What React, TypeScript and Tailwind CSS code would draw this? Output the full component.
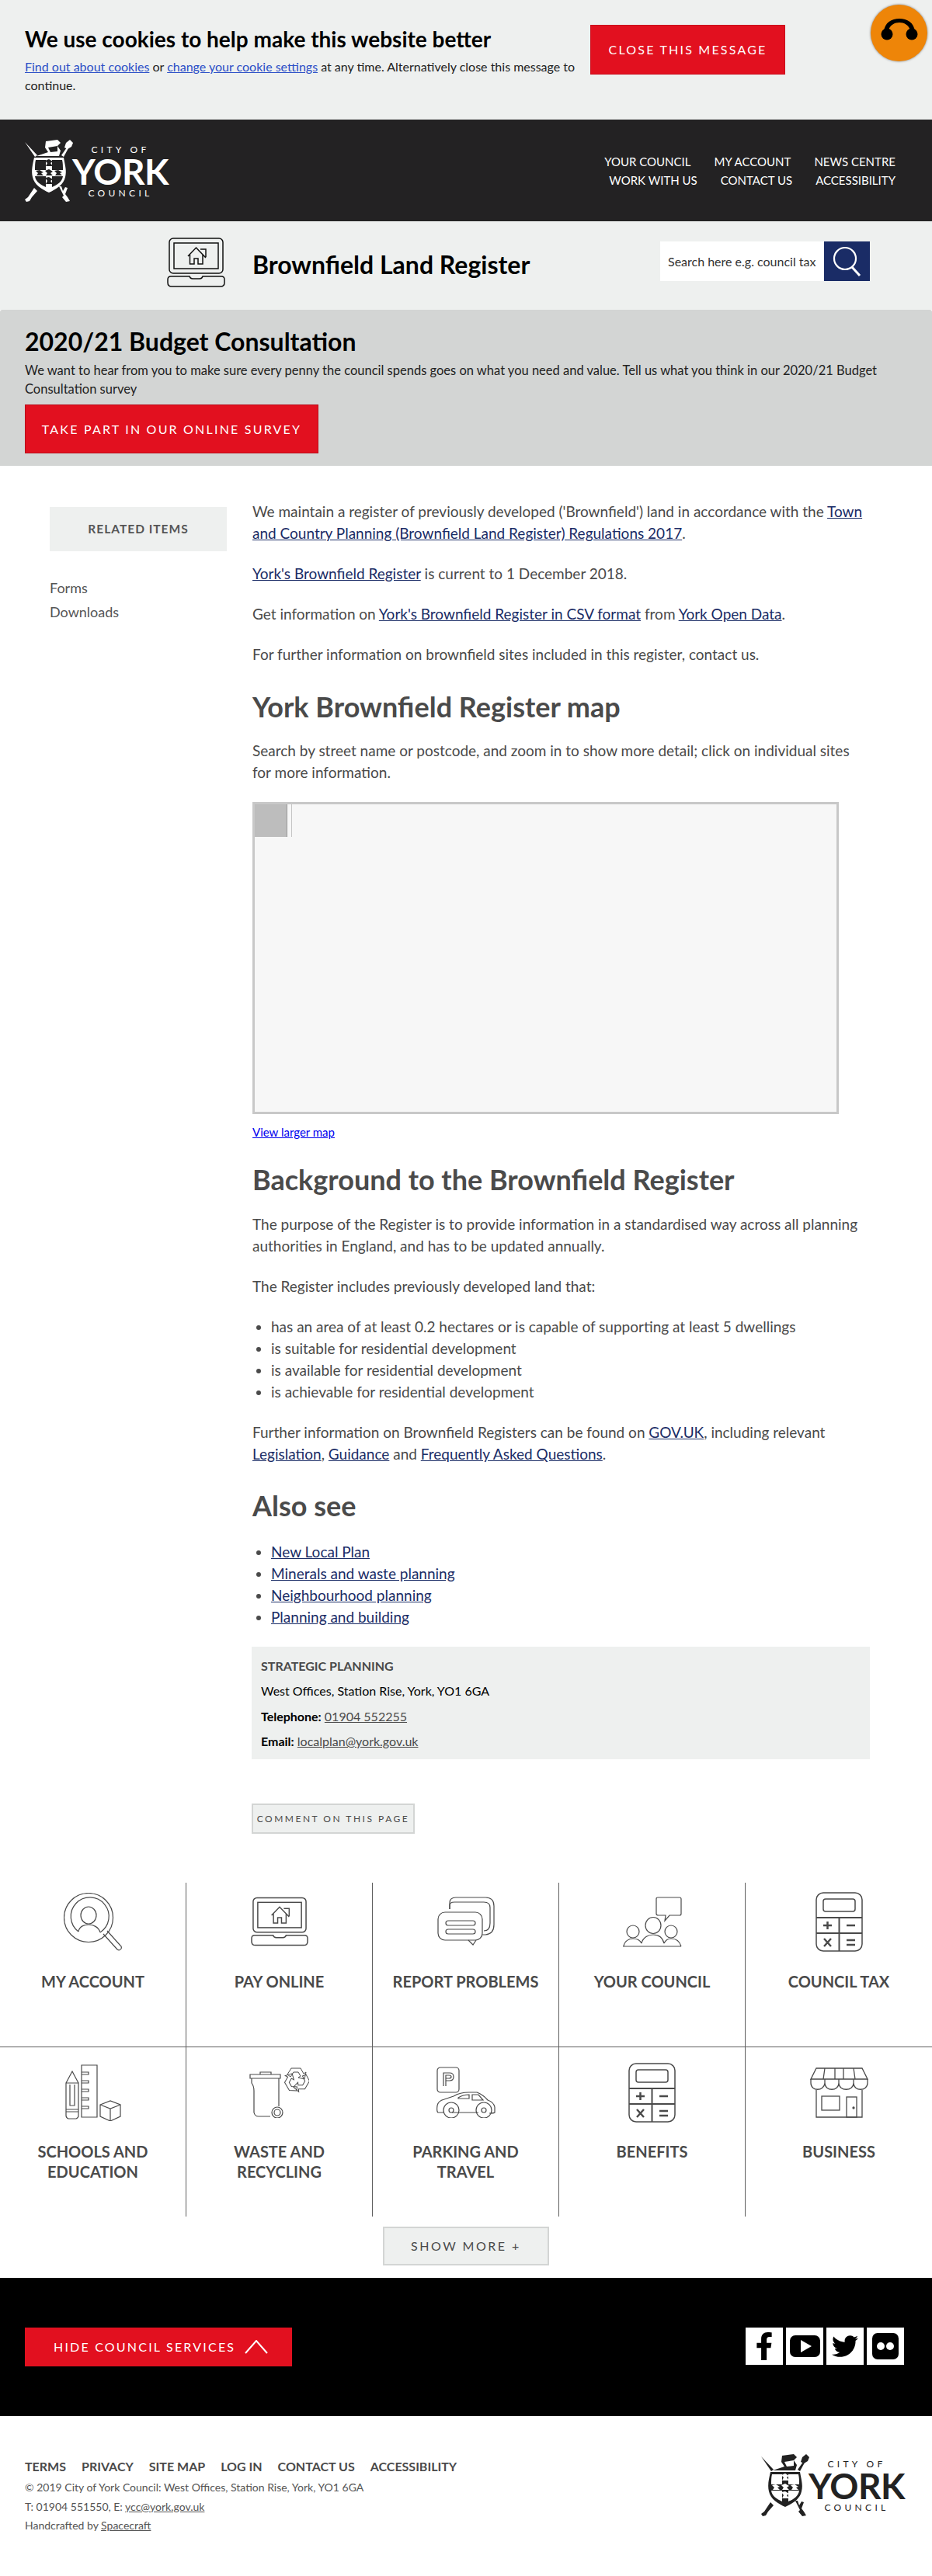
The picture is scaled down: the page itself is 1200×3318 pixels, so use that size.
import { FaFacebookF, FaTwitter } from "react-icons/fa"

const link = "text-[#1a2c66] underline"

function Crest({ fg, bg }: { fg: string; bg: string }) {
  return (
    <svg viewBox="0 0 62 80" className="w-[62px] h-[80px] shrink-0">
      {/* sword and mace behind the shield */}
      <path d="M0 3 L16 20 L13 22 Z" fill={fg} />
      <path d="M47 20 L54 10 L56 11 L50 22 Z" fill={fg} />
      <path d="M53 4 L58 0 L62 4 L60 9 L55 12 L51 10 Z" fill={fg} />
      <path d="M12 62 L4 74 L0 77 L2 80 L6 79 L9 74 L16 66 Z" fill={fg} />
      <path d="M44 60 L50 72 L48 74 L53 80 L58 79 L55 74 L52 70 L55 62 L52 61 L49 66 L47 60 Z" fill={fg} />
      {/* helmet */}
      <path d="M15 21 L30 16 L26 10 L27 2 L42 0 L46 4 L42 8 L46 14 L44 21 Z" fill={fg} />
      <path d="M30 10 L42 8 L42 15 L33 16 Z" fill={bg} />
      {/* shield */}
      <path d="M12 23 H50 C52 34 54 40 52 48 C50 58 40 64 31 68 C22 64 12 58 10 48 C8 40 10 32 12 23 Z" fill={fg} />
      <path d="M14 26 H27 V39 H13 C13 34 13 30 14 26 Z" fill={bg} />
      <path d="M35 26 H48 C49 30 49 34 49 39 H35 Z" fill={bg} />
      <path d="M13 47 H27 V61 C20 58 14 54 13 47 Z" fill={bg} />
      <path d="M35 47 H49 C48 54 42 58 35 61 Z" fill={bg} />
      {/* lions */}
      <path d="M26 27 L31 25 L36 28 L33 30 L36 34 L27 34 L29 30 Z" fill={bg} />
      <path d="M26 40 L31 38 L36 41 L33 43 L36 46 L27 46 L29 43 Z" fill={bg} />
      <path d="M14 40 L19 39 L24 42 L21 43 L24 46 L15 46 L17 43 Z" fill={bg} />
      <path d="M38 40 L43 39 L48 42 L45 43 L48 46 L39 46 L41 43 Z" fill={bg} />
      <path d="M26 49 L31 48 L36 51 L33 53 L36 57 L27 57 L29 53 Z" fill={bg} />
    </svg>
  )
}

function Logo({ fg, bg, text }: { fg: string; bg: string; text: string }) {
  return (
    <div className="flex w-[188px]">
      <Crest fg={fg} bg={bg} />
      <div className={`flex flex-col items-center w-[130px] -ml-[4px] pt-[6px] ${text}`}>
        <span className="text-[12px] leading-[14px] tracking-[0.36em]">CITY OF</span>
        <span className="text-[46px] leading-[38px] mt-[2px] font-bold tracking-[-0.5px]">YORK</span>
        <span className="text-[12px] leading-[14px] tracking-[0.36em] mt-[2px]">COUNCIL</span>
      </div>
    </div>
  )
}

function Laptop({ className }: { className: string }) {
  return (
    <svg viewBox="0 0 75 64" fill="none" stroke="currentColor" strokeWidth="1.5" className={className}>
      <rect x="3" y="1" width="69" height="45" rx="5" />
      <rect x="9" y="7" width="57" height="33" />
      <path d="M5 50 H29 Q30 53 33 53 H42 Q45 53 46 50 H70 Q74 50 74 54 V58 Q74 63 69 63 H6 Q1 63 1 58 V54 Q1 50 5 50 Z" />
      <path d="M27 24 L37.500 13 L50 26 M29.500 22 V34 H35 V27 H40 V34 H46 V22 M43 15 H50 V25" />
    </svg>
  )
}

function AccountIcon() {
  return (
    <svg viewBox="0 0 75 75" fill="none" stroke="currentColor" strokeWidth="1.2" className="w-[75px] h-[75px]">
      <circle cx="32" cy="32" r="31.500" />
      <path d="M19 50 A24.500 24.500 0 1 1 47 51" />
      <ellipse cx="32" cy="29" rx="10" ry="11" />
      <path d="M19 50 C20 43 27 41 32 41 C38 41 45 44 47 51" />
      <path d="M51 53 L69 73 Q72 75 74 72 Q75 69 73 68 L56 49" />
    </svg>
  )
}

function ChatIcon() {
  return (
    <svg viewBox="0 0 74 64" fill="none" stroke="currentColor" strokeWidth="1.2" className="w-[74px] h-[64px]">
      <path d="M16 16 V8 Q16 1 24 1 H62 Q73 1 73 12 V36 Q73 48 62 49 H58" />
      <path d="M16 16 V11 Q16 7 22 7 H60 Q68 7 68 14 V34 Q68 44 60 44" />
      <rect x="1" y="20" width="57" height="36" rx="9" />
      <path d="M40 56 L46 62 L50 56" />
      <rect x="11" y="31" width="38" height="6" rx="3" />
      <rect x="11" y="42" width="38" height="6" rx="3" />
    </svg>
  )
}

function CouncilIcon() {
  return (
    <svg viewBox="0 0 76 65" fill="none" stroke="currentColor" strokeWidth="1.2" className="w-[76px] h-[65px]">
      <path d="M45 1 H73 Q75 1 75 3 V22 Q75 24 73 24 H60 L54 31 L55 24 H46 Q43 24 43 22 V3 Q43 1 45 1 Z" />
      <ellipse cx="39" cy="37" rx="10" ry="10.500" />
      <circle cx="13" cy="45" r="8" />
      <circle cx="62" cy="45" r="8" />
      <path d="M0 64 H75 M1 64 C2 57 8 54 13 54 C18 54 22 56 24 60 M24 60 C26 52 33 49 39 49 C45 49 51 52 53 60 M53 60 C55 56 58 54 62 54 C68 54 73 57 75 64" />
    </svg>
  )
}

function Calculator() {
  return (
    <svg viewBox="0 0 61 77" fill="none" stroke="currentColor" strokeWidth="1.5" className="w-[61px] h-[77px]">
      <rect x="1" y="1" width="59" height="75" rx="9" />
      <rect x="10" y="9" width="41" height="16" rx="3" />
      <path d="M1 33 H60 M1 53 H60 M30.500 33 V76" strokeWidth="2" />
      <path d="M10 43 H21 M15.500 38 V48 M40 43 H51 M11 60 L20 70 M20 60 L11 70 M40 62 H51 M40 68 H51" strokeWidth="2.500" />
    </svg>
  )
}

function SchoolIcon() {
  return (
    <svg viewBox="0 0 72 73" fill="none" stroke="currentColor" strokeWidth="1.2" className="w-[72px] h-[73px]">
      <path d="M1 24 L9 9 L17 24 M1 24 H17 V66 Q17 69 14 70 H4 Q1 69 1 66 Z M1 61 H17 M1 58 H17 M6 26 V53 H12 V26" />
      <path d="M21 1 H41 V68 H21 Z" />
      <path d="M21 10 H30 V13 H21 M21 21 H30 V24 H21 M21 32 H30 V35 H21 M21 43 H30 V46 H21 M21 54 H30 V57 H21" />
      <path d="M45 52 L58 47 L71 52 V67 L58 73 L45 67 Z M45 52 L58 57 L71 52 M58 57 V73" />
    </svg>
  )
}

const recycleArrow = "M-7 -15 L5 -15 L9 -8 L12 -10 L10 -1 L2 -3 L5 -5 L2 -10 L-4 -10 L-8 -4 L-12 -7 Z"

function WasteIcon() {
  return (
    <svg viewBox="0 0 77 65" fill="none" stroke="currentColor" strokeWidth="1.2" className="w-[77px] h-[65px]">
      <path d="M1 9 H40 V14 H1 Z M14 9 V6 H28 V9" />
      <path d="M3 14 V20 Q6 24 6 30 V58 Q7 63 12 63 H27 M38 14 V50" />
      <circle cx="36" cy="58" r="7" />
      <circle cx="36" cy="58" r="4" />
      <g transform="translate(61 16)" strokeWidth="1">
        <path d={recycleArrow} />
        <path d={recycleArrow} transform="rotate(120)" />
        <path d={recycleArrow} transform="rotate(240)" />
      </g>
    </svg>
  )
}

function ParkingIcon() {
  return (
    <svg viewBox="0 0 76 66" fill="none" stroke="currentColor" strokeWidth="1.2" className="w-[76px] h-[66px]">
      <rect x="1" y="1" width="28" height="32" rx="4" />
      <path d="M9 25 V8 H17 Q22 8 22 13 Q22 18 17 18 H12 M12 25 V11 H16 Q19 11 19 13 Q19 15 16 15 H12" />
      <path d="M9 59 H2 Q0 58 1 50 Q2 44 10 42 L22 38 Q30 33 42 33 H52 Q60 36 66 43 Q74 46 75 52 V59 Q74 60 68 60 M20 59 H54" />
      <path d="M28 40 Q34 36 42 36 V41 H28 Z M46 36 H54 L60 43 H46 Z" />
      <circle cx="19" cy="56" r="10" />
      <circle cx="19" cy="56" r="3" />
      <circle cx="61" cy="56" r="10" />
      <circle cx="61" cy="56" r="3" />
    </svg>
  )
}

function ShopIcon() {
  return (
    <svg viewBox="0 0 75 65" fill="none" stroke="currentColor" strokeWidth="1.3" className="w-[75px] h-[65px]">
      <path d="M8 1 H67 L74 15 H1 Z M19 1 L17 15 M32 1 V15 M43 1 V15 M56 1 L58 15" />
      <path d="M1 15 V20 C1 31 18 31 19 20 V15 M19 20 C19 31 37 31 37 20 V15 M37 20 C37 31 56 31 56 20 V15 M56 20 C56 31 74 31 74 20 V15" />
      <path d="M8 29 V64 H67 V29" />
      <rect x="15" y="37" width="23" height="18" />
      <rect x="47" y="38" width="13" height="26" />
      <circle cx="56" cy="52" r="1" fill="currentColor" />
    </svg>
  )
}

const rowOne = [
  { label: "MY ACCOUNT", icon: <AccountIcon /> },
  { label: "PAY ONLINE", icon: <Laptop className="w-[74px] h-[64px]" /> },
  { label: "REPORT PROBLEMS", icon: <ChatIcon /> },
  { label: "YOUR COUNCIL", icon: <CouncilIcon /> },
  { label: "COUNCIL TAX", icon: <Calculator /> },
]

const rowTwo = [
  { label: ["SCHOOLS AND", "EDUCATION"], icon: <SchoolIcon /> },
  { label: ["WASTE AND", "RECYCLING"], icon: <WasteIcon /> },
  { label: ["PARKING AND", "TRAVEL"], icon: <ParkingIcon /> },
  { label: ["BENEFITS"], icon: <Calculator /> },
  { label: ["BUSINESS"], icon: <ShopIcon /> },
]

export default function App() {
  return (
    <div className="[font-family:Lato,sans-serif] w-[1200px] h-[3318px] overflow-hidden bg-white relative text-[#4a4a4a]">
      {/* floating listen button */}
      <div className="absolute left-[1121px] top-[6px] w-[73px] h-[73px] rounded-full bg-[#ee8508] shadow-[0_0_3px_#777] flex items-start justify-center">
        <svg viewBox="0 0 48 30" className="w-[48px] h-[30px] mt-[17px]">
          <path d="M4 18 C5 6 14 1 24 1 C34 1 43 6 44 18 L38 16 C36 9 30 6 24 6 C18 6 12 9 10 16 Z" fill="#000" />
          <circle cx="8" cy="21" r="7.500" fill="#000" />
          <circle cx="40" cy="21" r="7.500" fill="#000" />
        </svg>
      </div>

      {/* cookie notice */}
      <section className="h-[154px] bg-[#eef0ef] flex pl-8 text-black">
        <div className="w-[715px] pt-[30px]">
          <h2 className="text-[28px] leading-[40px] font-bold">We use cookies to help make this website better</h2>
          <p className="text-[16px] leading-[24px] mt-[4px] text-[#222]">
            <a className="text-[#2b4fc7] underline">Find out about cookies</a> or{" "}
            <a className="text-[#2b4fc7] underline">change your cookie settings</a> at any time. Alternatively close this message to continue.
          </p>
        </div>
        <button className="ml-[13px] mt-[32px] w-[251px] h-[64px] bg-[#e2101f] border border-[#c90e1c] text-white text-[16px] tracking-[2.200px]">
          CLOSE THIS MESSAGE
        </button>
      </section>

      {/* site header */}
      <header className="h-[131px] bg-[#232223] flex justify-between pl-8 pr-[47px] pt-[26px]">
        <Logo fg="#fff" bg="#232223" text="text-white" />
        <nav className="text-white text-[15px] leading-[24px] pt-[16px] flex flex-col items-end">
          <div className="flex gap-[30px]">
            <a>YOUR COUNCIL</a>
            <a>MY ACCOUNT</a>
            <a>NEWS CENTRE</a>
          </div>
          <div className="flex gap-[30px]">
            <a>WORK WITH US</a>
            <a>CONTACT US</a>
            <a>ACCESSIBILITY</a>
          </div>
        </nav>
      </header>

      {/* page title and search */}
      <section className="h-[114px] bg-[#eef0ef] flex items-center pl-[215px] pr-[80px] text-black">
        <Laptop className="w-[75px] h-[64px] text-[#111] -mt-[8px]" />
        <h1 className="ml-[35px] text-[32px] leading-[44px] font-bold -mt-[2px]">Brownfield Land Register</h1>
        <div className="ml-auto flex w-[270px] h-[51px] -mt-[11px]">
          <div className="w-[211px] bg-white pl-[10px] text-[16px] leading-[51px] text-[#333] whitespace-nowrap">Search here e.g. council tax</div>
          <div className="w-[59px] bg-[#1a2c66] flex items-center justify-center">
            <svg viewBox="0 0 40 40" fill="none" stroke="#fff" strokeWidth="2.200" className="w-[40px] h-[40px]">
              <circle cx="17" cy="16" r="14" />
              <path d="M26 27 L36 38" strokeWidth="3" />
            </svg>
          </div>
        </div>
      </section>

      {/* budget consultation banner */}
      <section className="h-[201px] bg-[#d3d5d4] rounded-t-[3px] px-8 pt-[19px] text-black">
        <h2 className="text-[32px] leading-[44px] font-bold">2020/21 Budget Consultation</h2>
        <p className="text-[16.500px] leading-[24px] mt-[3px] w-[1110px] text-[#222]">
          We want to hear from you to make sure every penny the council spends goes on what you need and value. Tell us what you think in our 2020/21 Budget Consultation survey
        </p>
        <button className="block mt-[8px] w-[378px] h-[63px] bg-[#e2101f] border border-[#b90d1a] text-white text-[16px] tracking-[2.200px]">
          TAKE PART IN OUR ONLINE SURVEY
        </button>
      </section>

      {/* main content */}
      <main className="flex pl-16 pt-[45px]">
        <aside className="w-[228px] pt-[8px] shrink-0">
          <div className="h-[57px] bg-[#eef0ef] flex items-center justify-center text-[15.500px] font-bold tracking-[1px] text-[#555]">RELATED ITEMS</div>
          <ul className="mt-[32px] text-[18px] leading-[31px] text-[#555]">
            <li>Forms</li>
            <li>Downloads</li>
          </ul>
        </aside>
        <article className="ml-[33px] w-[795px] text-[19px] leading-[28px]">
          <p>
            We maintain a register of previously developed ('Brownfield') land in accordance with the{" "}
            <a className={link}>Town and Country Planning (Brownfield Land Register) Regulations 2017</a>.
          </p>
          <p className="mt-6"><a className={link}>York's Brownfield Register</a> is current to 1 December 2018.</p>
          <p className="mt-6">
            Get information on <a className={link}>York's Brownfield Register in CSV format</a> from <a className={link}>York Open Data</a>.
          </p>
          <p className="mt-6">For further information on brownfield sites included in this register, contact us.</p>
          <h2 className="mt-[31px] text-[36px] leading-[44px] font-bold">York Brownfield Register map</h2>
          <p className="mt-[21px]">Search by street name or postcode, and zoom in to show more detail; click on individual sites for more information.</p>
          <div className="mt-6 w-[755px] h-[402px] border-[3px] border-[#c8c8c8] bg-[#f7f7f7] flex items-start">
            <div className="w-[42px] h-[42px] bg-[#bdbdbd] border-r border-[#999]"></div>
            <div className="ml-[5px] w-px h-[42px] bg-[#c4c4c4]"></div>
          </div>
          <a className="block mt-[13px] text-[15px] leading-[20px] text-[#0000ee] underline">View larger map</a>
          <h2 className="mt-[29px] text-[36px] leading-[44px] font-bold">Background to the Brownfield Register</h2>
          <p className="mt-[22px]">The purpose of the Register is to provide information in a standardised way across all planning authorities in England, and has to be updated annually.</p>
          <p className="mt-6">The Register includes previously developed land that:</p>
          <ul className="mt-6 list-disc pl-6">
            <li>has an area of at least 0.2 hectares or is capable of supporting at least 5 dwellings</li>
            <li>is suitable for residential development</li>
            <li>is available for residential development</li>
            <li>is achievable for residential development</li>
          </ul>
          <p className="mt-6">
            Further information on Brownfield Registers can be found on <a className={link}>GOV.UK</a>, including relevant{" "}
            <a className={link}>Legislation</a>, <a className={link}>Guidance</a> and <a className={link}>Frequently Asked Questions</a>.
          </p>
          <h2 className="mt-[30px] text-[36px] leading-[44px] font-bold">Also see</h2>
          <ul className="mt-6 list-disc pl-6">
            <li><a className={link}>New Local Plan</a></li>
            <li><a className={link}>Minerals and waste planning</a></li>
            <li><a className={link}>Neighbourhood planning</a></li>
            <li><a className={link}>Planning and building</a></li>
          </ul>
          <div className="mt-6 -ml-px w-[796px] h-[145px] bg-[#eef0ef] px-3 pt-[9px] text-[16px] leading-[32.300px] text-black">
            <div className="font-bold text-[#4a4a4a]">STRATEGIC PLANNING</div>
            <div>West Offices, Station Rise, York, YO1 6GA</div>
            <div><b className="font-bold">Telephone:</b> <a className="text-[#4a4a4a] underline">01904 552255</a></div>
            <div><b className="font-bold">Email:</b> <a className="text-[#4a4a4a] underline">localplan@york.gov.uk</a></div>
          </div>
          <button className="block mt-[57px] -ml-px w-[210px] h-[39px] bg-[#eef0ef] border-2 border-[#d3d5d4] text-[12px] tracking-[2.500px] text-[#4a4a4a]">
            COMMENT ON THIS PAGE
          </button>
        </article>
      </main>

      {/* service grid */}
      <section className="mt-[63px] text-[#4a4a4a]">
        <div className="grid grid-cols-5 border-b border-[#5f5f5f] h-[212px]">
          {rowOne.map((item, i) => (
            <div key={item.label} className={`text-center ${i < 4 ? "border-r border-[#5f5f5f]" : ""}`}>
              <div className="h-[100px] flex items-center justify-center">{item.icon}</div>
              <div className="mt-[14px] text-[20px] leading-[26px] font-bold">{item.label}</div>
            </div>
          ))}
        </div>
        <div className="grid grid-cols-5 h-[218px]">
          {rowTwo.map((item, i) => (
            <div key={item.label[0]} className={`text-center pt-[8px] ${i < 4 ? "border-r border-[#5f5f5f]" : ""}`}>
              <div className="h-[100px] flex items-center justify-center">{item.icon}</div>
              <div className="mt-[13px] text-[20px] leading-[26px] font-bold">
                {item.label.map((line) => (
                  <div key={line}>{line}</div>
                ))}
              </div>
            </div>
          ))}
        </div>
      </section>

      <button className="block mx-auto mt-[13px] w-[214px] h-[50px] bg-[#eef0ef] border-2 border-[#d3d5d4] text-[16px] tracking-[2.500px] text-[#4a4a4a]">
        SHOW MORE +
      </button>

      {/* council services bar */}
      <section className="mt-[16px] h-[178px] bg-black flex justify-between pl-8 pr-[36px] pt-[64px]">
        <button className="w-[344px] h-[50px] bg-[#e2101f] flex items-center pl-[37px] text-white text-[16px] tracking-[2.200px]">
          HIDE COUNCIL SERVICES
          <svg viewBox="0 0 30 18" fill="none" stroke="#fff" strokeWidth="2" className="w-[30px] h-[18px] ml-[12px]">
            <path d="M1 17 L15 1 L29 17" />
          </svg>
        </button>
        <div className="flex gap-1">
          <div className="w-[48px] h-[48px] bg-white flex items-center justify-center text-black">
            <FaFacebookF className="w-[36px] h-[36px]" />
          </div>
          <div className="w-[48px] h-[48px] bg-white flex items-center justify-center">
            <svg viewBox="0 0 39 28" className="w-[39px] h-[28px]">
              <rect width="39" height="28" rx="7" fill="#000" />
              <path d="M14 6 L28 14 L14 22 Z" fill="#fff" />
            </svg>
          </div>
          <div className="w-[48px] h-[48px] bg-white flex items-center justify-center text-black">
            <FaTwitter className="w-[34px] h-[34px]" />
          </div>
          <div className="w-[48px] h-[48px] bg-white flex items-center justify-center">
            <svg viewBox="0 0 34 34" className="w-[34px] h-[34px]">
              <rect width="34" height="34" rx="7" fill="#000" />
              <circle cx="11" cy="17" r="5" fill="#fff" />
              <circle cx="23" cy="17" r="5" fill="#fff" />
            </svg>
          </div>
        </div>
      </section>

      {/* footer */}
      <footer className="flex justify-between pl-8 pr-[32px] pt-[49px]">
        <div className="pt-[5px]">
          <nav className="flex gap-[20px] text-[16px] leading-[22px] font-bold">
            <a>TERMS</a>
            <a>PRIVACY</a>
            <a>SITE MAP</a>
            <a>LOG IN</a>
            <a>CONTACT US</a>
            <a>ACCESSIBILITY</a>
          </nav>
          <div className="mt-[4px] text-[14px] leading-[24.500px] text-[#555]">
            <p>© 2019 City of York Council: West Offices, Station Rise, York, YO1 6GA</p>
            <p>T: 01904 551550, E: <a className="underline">ycc@york.gov.uk</a></p>
            <p>Handcrafted by <a className="underline">Spacecraft</a></p>
          </div>
        </div>
        <Logo fg="#222" bg="#fff" text="text-[#222]" />
      </footer>
    </div>
  )
}
